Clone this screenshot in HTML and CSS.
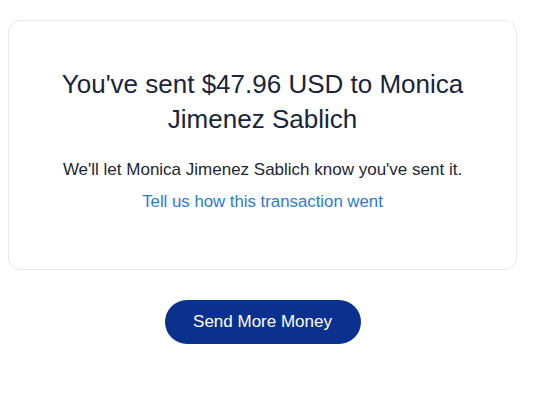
FILE: index.html
```html
<!DOCTYPE html>
<html>
<head>
<meta charset="utf-8">
<link rel="stylesheet" href="styles.css">
</head>
<body>
<main class="page">
  <section class="card">
    <h1 class="title">You've sent $47.96 USD to Monica Jimenez Sablich</h1>
    <p class="note">We'll let Monica Jimenez Sablich know you've sent it.</p>
    <a class="link" href="#">Tell us how this transaction went</a>
  </section>
  <div class="actions">
    <button class="btn">Send More Money</button>
  </div>
</main>
</body>
</html>
```

FILE: styles.css
```css
html, body {
  margin: 0;
  padding: 0;
  background: #ffffff;
}
body {
  font-family: "Liberation Sans", Arial, sans-serif;
  color: #1c2634;
}
.page {
  padding: 20px 17px 0 8px;
  display: flex;
  flex-direction: column;
}
.card {
  box-sizing: border-box;
  width: 509px;
  height: 250px;
  border: 1px solid #e6e8ea;
  border-radius: 12px;
  padding: 46px 20px 0;
  display: flex;
  flex-direction: column;
  align-items: center;
  text-align: center;
}
.title {
  margin: 0;
  font-size: 26px;
  line-height: 35px;
  font-weight: 400;
  color: #18253a;
  max-width: 440px;
}
.note {
  margin: 22px 0 0;
  font-size: 17px;
  line-height: 22px;
  color: #1c2634;
}
.link {
  margin-top: 10px;
  font-size: 16.8px;
  line-height: 22px;
  color: #2c7ad0;
  text-decoration: none;
}
.actions {
  display: flex;
  justify-content: center;
  padding-top: 30px;
}
.btn {
  width: 196px;
  height: 44px;
  border: none;
  border-radius: 22px;
  background: #0b318f;
  color: #ffffff;
  font-family: "Liberation Sans", Arial, sans-serif;
  font-size: 17px;
  padding: 0;
}
```
